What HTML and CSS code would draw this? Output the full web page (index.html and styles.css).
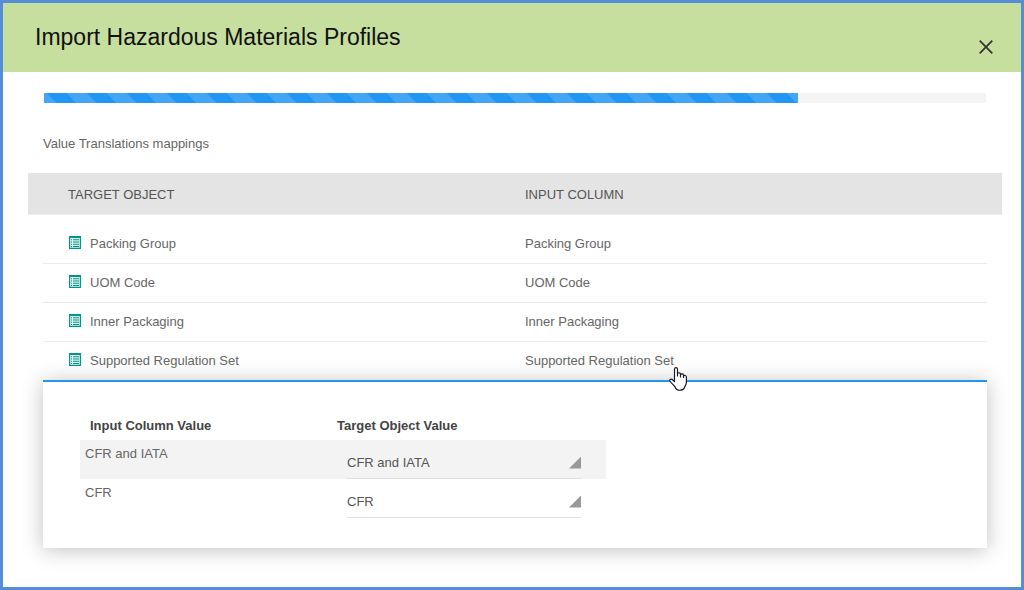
FILE: index.html
```html
<!DOCTYPE html>
<html lang="en">
<head>
<meta charset="utf-8">
<title>Import Hazardous Materials Profiles</title>
<link rel="stylesheet" href="styles.css">
</head>
<body>
<svg class="defs" width="0" height="0" aria-hidden="true">
  <symbol id="list" viewBox="0 0 12 13">
    <path fill="#e0f3f1" d="M1 2h10v10H1z"/>
    <path fill="#009688" fill-rule="evenodd" d="M0 0h12v13H0zM1.200 2v9.800h9.600V2z"/>
    <path fill="#009688" d="M2 3.200h1v1H2zM2 5.500h1v1H2zM2 7.800h1v1H2zM2 10h1v1H2zM4 3.200h6v1H4zM4 5.500h6v1H4zM4 7.800h6v1H4zM4 10h6v1H4z"/>
  </symbol>
</svg>
<div class="dialog">
  <header class="dialog-header">
    <h1 class="title">Import Hazardous Materials Profiles</h1>
    <button class="close" aria-label="Close"><svg width="14" height="14" viewBox="0 0 14 14"><path d="M.7.7l12.6 12.6M13.3.7L.7 13.3" stroke="#333" stroke-width="1.7"/></svg></button>
  </header>
  <main class="content">
    <div class="progress"><div class="progress-bar" style="width:754px"></div></div>
    <p class="caption">Value Translations mappings</p>
    <div class="table-head"><span>TARGET OBJECT</span><span>INPUT COLUMN</span></div>
    <div class="rows">
      <div class="row"><span class="target"><svg class="icon"><use href="#list"/></svg><span class="label">Packing Group</span></span><span class="label">Packing Group</span></div>
      <div class="row"><span class="target"><svg class="icon"><use href="#list"/></svg><span class="label">UOM Code</span></span><span class="label">UOM Code</span></div>
      <div class="row"><span class="target"><svg class="icon"><use href="#list"/></svg><span class="label">Inner Packaging</span></span><span class="label">Inner Packaging</span></div>
      <div class="row last"><span class="target"><svg class="icon"><use href="#list"/></svg><span class="label">Supported Regulation Set</span></span><span class="label">Supported Regulation Set</span></div>
    </div>
    <section class="panel">
      <div class="values-head"><span>Input Column Value</span><span>Target Object Value</span></div>
      <div class="value shaded"><span class="input">CFR and IATA</span><div class="select"><span>CFR and IATA</span><i class="arrow"></i></div></div>
      <div class="value"><span class="input">CFR</span><div class="select"><span>CFR</span><i class="arrow"></i></div></div>
    </section>
  </main>
  <svg class="cursor" width="18" height="24" viewBox="0 0 18 24"><path d="M5.5 14.5V2.2C5.5.2 8.5.2 8.5 2.2V9V6.7C9 5.3 11.5 5.5 11.5 7.2V10V7.7C12 6.500 14.500 6.700 14.500 8.200V10.500V9C15 8 17.400 8.300 17.400 10V15.500C17.400 17.500 16.300 18.500 15.700 20C14.500 24.300 7.500 24.300 6.200 20.300C5.600 18.700 1.800 16 .8 13.800C.3 12.200 2.300 11.700 3.500 12.700Z" fill="#fff" stroke="#1a1a2e" stroke-width="1.2" stroke-linejoin="round"/></svg>
</div>
</body>
</html>
```
FILE: styles.css
```css
* { box-sizing: border-box; }
body {
  margin: 0;
  font-family: "Liberation Sans", Arial, sans-serif;
  font-size: 13px;
  line-height: 16px;
  color: #666;
}
.defs { position: absolute; }
.dialog {
  position: relative;
  width: 1024px;
  height: 590px;
  border: 3px solid #558ed5;
  background: #fff;
  overflow: hidden;
}
.dialog-header {
  display: flex;
  justify-content: space-between;
  height: 69px;
  padding: 18px 28px 0 32px;
  background: #c6df9e;
}
.title {
  margin: 0;
  font-size: 23px;
  line-height: 32px;
  font-weight: 400;
  color: #111;
}
.close {
  display: flex;
  height: 14px;
  margin-top: 19px;
  padding: 0;
  border: 0;
  background: none;
}
.content { padding: 21px 34px 0 40px; }
.progress {
  width: 942px;
  height: 10px;
  margin-left: 1px;
  background: #f4f4f4;
}
.progress-bar {
  height: 10px;
  background-color: #2196f3;
  background-image: linear-gradient(45deg, rgba(255,255,255,.15) 25%, transparent 25%, transparent 50%, rgba(255,255,255,.15) 50%, rgba(255,255,255,.15) 75%, transparent 75%);
  background-size: 40px 40px;
  background-position: -17px 0;
}
.caption { margin: 33px 0 21px; }
.table-head {
  display: grid;
  grid-template-columns: 457px 1fr;
  align-items: center;
  width: 974px;
  height: 42px;
  margin-left: -15px;
  padding: 2px 0 0 40px;
  background: #e4e4e4;
  border-bottom: 1px solid #eee;
  color: #555;
}
.rows { padding-top: 10px; }
.row {
  display: grid;
  grid-template-columns: 482px 1fr;
  align-items: center;
  width: 944px;
  height: 39px;
  border-bottom: 1px solid #ececec;
}
.row.last { height: 38px; border-bottom: 0; }
.target {
  display: flex;
  align-items: flex-start;
  padding-left: 26px;
  gap: 9px;
}
.icon { width: 12px; height: 13px; }
.panel {
  width: 944px;
  height: 168px;
  padding: 36px 37px 0;
  background: #fff;
  border-top: 2px solid #2196f3;
  box-shadow: 0 2px 20px rgba(0,0,0,.25);
}
.values-head {
  display: grid;
  grid-template-columns: 247px 1fr;
  height: 22px;
  padding-left: 10px;
  font-weight: 700;
  color: #444;
}
.value {
  display: grid;
  grid-template-columns: 262px 234px;
  width: 526px;
  height: 39px;
  padding-left: 5px;
}
.shaded { background: #f3f3f3; }
.input { padding-top: 6px; }
.select {
  display: flex;
  align-items: center;
  justify-content: space-between;
  height: 39px;
  padding-top: 7px;
  border-bottom: 1px solid #ddd;
  color: #555;
}
.arrow {
  width: 12px;
  height: 12px;
  background: #999;
  clip-path: polygon(100% 0, 100% 100%, 0 100%);
}
.cursor {
  position: absolute;
  left: 666px;
  top: 364px;
}
```
